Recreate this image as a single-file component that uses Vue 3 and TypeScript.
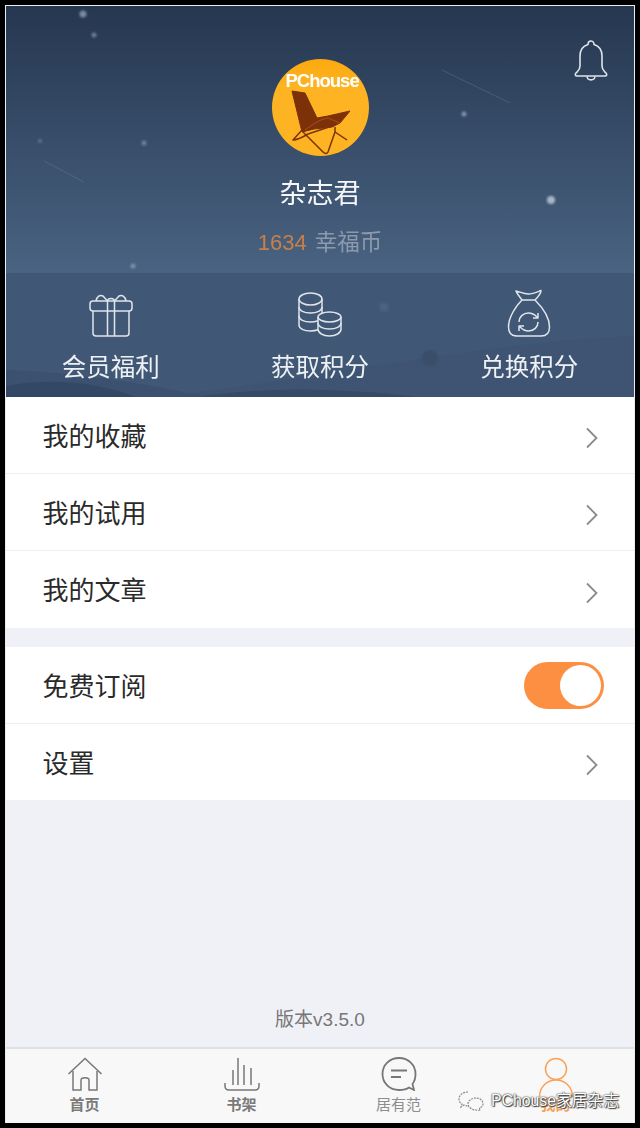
<template>
  <div class="frame">
    <div class="screen">
      <header class="hero">
        <!-- 背景星星和山丘 -->
        <svg class="sky" viewBox="0 0 628 391" width="628" height="391">
          <g class="stars" fill="#b4c0ce">
            <circle cx="77" cy="8" r="3.500" opacity=".6" />
            <circle cx="88" cy="29" r="2.500" opacity=".5" />
            <circle cx="34" cy="135" r="2" opacity=".35" />
            <circle cx="138" cy="137" r="2.500" opacity=".45" />
            <circle cx="458" cy="108" r="2.500" opacity=".6" />
            <circle cx="545" cy="194" r="4" opacity=".9" />
            <circle cx="127" cy="260" r="2.500" opacity=".5" />
            <circle cx="378" cy="301" r="4.500" opacity=".4" />
          </g>
          <g stroke="#8fa0b5" stroke-width="1" opacity=".25">
            <line x1="436" y1="64" x2="504" y2="97" />
            <line x1="38" y1="155" x2="78" y2="176" />
          </g>
          <rect x="0" y="267" width="628" height="124" fill="#3d5371" opacity=".72" />
          <path d="M150 391 C250 380 330 365 420 352 C500 340 570 332 628 330 V391Z" fill="#3e5472" />
          <path d="M0 364 C60 366 130 375 200 391 H0Z" fill="#3c516f" />
          <path d="M0 380 C40 372 90 375 130 391 H0Z" fill="#334864" />
          <path d="M190 391 C260 380 340 382 410 391Z" fill="#364b68" />
          <circle class="tree" cx="424" cy="352" r="8" fill="#3a4e69" />
        </svg>

        <button class="bell" aria-label="通知">
          <svg viewBox="0 0 36 42" width="36" height="42" fill="none" stroke="#dfe4ea" stroke-width="1.600" stroke-linejoin="round">
            <path d="M18 2 C15.500 2 15 4.500 15 5.500 C10 7 7 11 7 17 V27 C7 31 5 32 3 34 C1.500 35.500 2.500 37 4 37 H32 C33.500 37 34.500 35.500 33 34 C31 32 29 31 29 27 V17 C29 11 26 7 21 5.500 C21 4.500 20.500 2 18 2Z" />
            <path d="M14 37.500 C14.500 42 21.500 42 22 37.500" />
          </svg>
        </button>

        <div class="profile">
          <div class="avatar">
            <span class="avatar-brand">PChouse</span>
            <svg class="chair" viewBox="0 0 97 97" width="97" height="97">
              <path d="M20 32 L33 34 L45 59 L56 57 L78 52 L68 64 L60 68 L42 70 L30 73Z" fill="#7c3109" stroke="#7c3109" stroke-width="1" stroke-linejoin="round" />
              <g fill="none" stroke="#7c3109" stroke-width="1.500" stroke-linejoin="round">
                <path d="M30 71 L21 81 C26 81 31 78 36 75 L63 66" />
                <path d="M31 73 L51 93 C53 95 55 95 56 93 L63 73 V68" />
                <path d="M63 73 L75 81" />
              </g>
              <path d="M33 71 C40 66 48 60 56 59 L68 64" fill="none" stroke="#b5561a" stroke-width=".8" />
            </svg>
          </div>
          <div class="nickname">杂志君</div>
          <div class="coins"><span class="coin-num">1634</span> <span class="coin-unit">幸福币</span></div>
        </div>

        <nav class="actions">
          <div class="action">
            <div class="action-icon">
              <svg viewBox="0 0 44 43" width="44" height="43" fill="none" stroke="#dfe5ea" stroke-width="1.500" stroke-linejoin="round">
                <rect x="1" y="7" width="42" height="10" rx="3" />
                <path d="M4 17 V39 a3 3 0 0 0 3 3 H37 a3 3 0 0 0 3 -3 V17" />
                <path d="M18.500 7 V42 M25.500 7 V42" />
                <path d="M7 7 C8 2 11 .800 14 2 L18.500 7" />
                <path d="M37 7 C36 2 33 .800 30 2 L25.500 7" />
                <path d="M18.500 7 C19 3.500 25 3.500 25.500 7" />
              </svg>
            </div>
            <span>会员福利</span>
          </div>
          <div class="action">
            <div class="action-icon">
              <svg viewBox="0 0 44 45" width="44" height="45" fill="none" stroke="#dfe5ea" stroke-width="1.500">
                <ellipse cx="12.500" cy="7" rx="11.500" ry="6" />
                <path d="M1 7 V33 c0 3.500 5 6 11.500 6 c2.500 0 5 -.300 7.500 -1.200" />
                <path d="M24 7 V21" />
                <path d="M1 15 c0 3.500 5 6 11.500 6 s11.500 -2.500 11.500 -6" />
                <path d="M1 24 c0 3.500 5 6 11.500 6 c3 0 5 -.400 7.500 -1.200" />
                <ellipse cx="31.500" cy="25" rx="11.500" ry="5" />
                <path d="M20 25 V37 c0 4 5 7 11.500 7 s11.500 -3 11.500 -7 V25" />
                <path d="M20 31 c0 3.500 5 6 11.500 6 s11.500 -2.500 11.500 -6" />
              </svg>
            </div>
            <span>获取积分</span>
          </div>
          <div class="action">
            <div class="action-icon">
              <svg viewBox="0 0 44 48" width="44" height="48" fill="none" stroke="#dfe5ea" stroke-width="1.500" stroke-linejoin="round">
                <path d="M9 2 C13 3 17 5 21.500 5 C26 5 30 3 34 1.500 C34 5 31 8 28 11 H15 C13 8 10 5 9 2Z" />
                <path d="M15 11 C9 17 1.500 28 1.500 38 C1.500 44 5 47 10 47 H34 C39 47 42.500 44 42.500 38 C42.500 28 34 17 28 11" />
                <path d="M12 33 C12 28 16 24 21.500 24 C25 24 28 26 30 28 M31 24 V29 H26" />
                <path d="M31 33 C31 38 27 42 21.500 42 C18 42 15 40 13 38 M12 42 V37 H17" />
              </svg>
            </div>
            <span>兑换积分</span>
          </div>
        </nav>
      </header>

      <ul class="group">
        <li v-for="item in topMenu" :key="item" class="row">
          <span>{{ item }}</span>
          <svg class="chevron" viewBox="0 0 14 22" width="14" height="22" fill="none" stroke="#8b8b8b" stroke-width="1.800">
            <path d="M2 1.500 L11.500 11 L2 20.500" />
          </svg>
        </li>
      </ul>

      <ul class="group second">
        <li class="row">
          <span>免费订阅</span>
          <div class="switch"><div class="knob"></div></div>
        </li>
        <li class="row">
          <span>设置</span>
          <svg class="chevron" viewBox="0 0 14 22" width="14" height="22" fill="none" stroke="#8b8b8b" stroke-width="1.800">
            <path d="M2 1.500 L11.500 11 L2 20.500" />
          </svg>
        </li>
      </ul>

      <div class="version">版本v3.5.0</div>

      <footer class="tabbar">
        <div class="tab">
          <svg viewBox="0 0 36 34" width="36" height="34" fill="none" stroke="#777" stroke-width="1.500">
            <path d="M1.500 17 L18 1.500 L34.500 17" />
            <path d="M6 14 V33 H14 V23 C14 20 22 20 22 23 V33 H30 V14" />
          </svg>
          <span class="bold">首页</span>
        </div>
        <div class="tab">
          <svg viewBox="0 0 36 34" width="36" height="34" fill="none" stroke="#777" stroke-width="1.500">
            <path d="M1 26 V29 C1 32 2 33 5 33 H31 C34 33 35 32 35 29 V26" />
            <path d="M9 13 V28 M14 1 V28 M20 8 V28 M27 11 V28" />
          </svg>
          <span class="bold">书架</span>
        </div>
        <div class="tab">
          <svg viewBox="0 0 36 34" width="36" height="34" fill="none" stroke="#777" stroke-width="1.800">
            <path d="M18 1 C8.500 1 1.500 8 1.500 17 C1.500 26 8.500 33 18 33 C22 33 26 32 28 30.500 L33 33 L31.500 27 C33.500 24.500 34.500 21 34.500 17 C34.500 8 27.500 1 18 1Z" />
            <path d="M10 13.500 H26 M10 20 H20" />
          </svg>
          <span>居有范</span>
        </div>
        <div class="tab active">
          <svg class="person" viewBox="0 0 36 40" width="36" height="40" fill="none" stroke="#f9a25a" stroke-width="1.500">
            <circle cx="18" cy="11" r="10.500" />
            <path d="M1.500 39 C1.500 29 9 22 18 22 C27 22 34.500 29 34.500 39" />
          </svg>
          <span class="bold">我的</span>
        </div>

        <!-- 公众号水印 -->
        <div class="watermark">
          <svg viewBox="0 0 26 20" width="26" height="20" fill="none" stroke="#8a8a8a" stroke-width="1.200" stroke-dasharray="2 1">
            <path d="M10 1 C5 1 1 4 1 8 C1 10 2 12 4 13 L3 16 L6 14 C8 15 9 15 10 15" />
            <path d="M18 7 C14 7 10 9.500 10 13 C10 16 14 19 18 19 L22 20 L21.500 17 C23.500 16 25 15 25 13 C25 9.500 22 7 18 7Z" />
          </svg>
          <span>PChouse家居杂志</span>
        </div>
      </footer>
    </div>
  </div>
</template>

<script setup lang="ts">
  const topMenu: string[] = ['我的收藏', '我的试用', '我的文章']
</script>

<style>
  html,
  body {
    margin: 0;
    background: #000;
  }
</style>

<style scoped>
  .frame {
    width: 640px;
    height: 1128px;
    box-sizing: border-box;
    padding: 5px;
    background: #000;
    font-family: "Liberation Sans", "Noto Sans CJK SC", sans-serif;
  }

  .screen {
    position: relative;
    width: 630px;
    height: 1118px;
    box-sizing: border-box;
    border: 1px solid #e9ecf0;
    border-bottom: none;
    background: #f0f1f6;
    display: flex;
    flex-direction: column;
  }

  /* 顶部个人信息 */
  .hero {
    position: relative;
    height: 391px;
    flex-shrink: 0;
    overflow: hidden;
    background: linear-gradient(180deg, #263750 0%, #4a6483 70%);
    display: flex;
    flex-direction: column;
  }

  .sky {
    position: absolute;
    left: 0;
    top: 0;
  }

  .stars,
  .tree {
    filter: blur(1px);
  }

  .bell {
    position: absolute;
    top: 33px;
    right: 25px;
    padding: 0;
    border: none;
    background: none;
    line-height: 0;
  }

  .profile {
    position: relative;
    height: 267px;
    box-sizing: border-box;
    padding-top: 53px;
    display: flex;
    flex-direction: column;
    align-items: center;
  }

  .avatar {
    position: relative;
    width: 97px;
    height: 97px;
    border-radius: 50%;
    background: linear-gradient(180deg, #fba90e 0%, #feb322 28%);
    overflow: hidden;
  }

  .avatar-brand {
    position: absolute;
    left: 14px;
    top: 11px;
    color: #fff;
    font-size: 18.500px;
    font-weight: 700;
    letter-spacing: -1px;
    line-height: 22px;
    z-index: 1;
  }

  .chair {
    position: absolute;
    left: 0;
    top: 0;
  }

  .nickname {
    margin-top: 20px;
    color: #f4f6f8;
    font-size: 27px;
    line-height: 36px;
  }

  .coins {
    margin-top: 17px;
    color: #8b9aac;
    font-size: 22px;
    line-height: 28px;
  }

  .coin-num {
    color: #c97f4a;
  }

  .coin-unit {
    margin-left: 2px;
    font-size: 22.500px;
  }

  .actions {
    position: relative;
    height: 124px;
    display: grid;
    grid-template-columns: repeat(3, 1fr);
  }

  .action {
    display: flex;
    flex-direction: column;
    align-items: center;
    padding-top: 16px;
    color: #eef1f4;
    font-size: 24.500px;
  }

  .action-icon {
    height: 48px;
    display: flex;
    align-items: flex-end;
  }

  .action span {
    margin-top: 14px;
    line-height: 34px;
  }

  /* 菜单 */
  .group {
    margin: 0;
    padding: 0;
    list-style: none;
    background: #fff;
  }

  .group.second {
    margin-top: 19px;
  }

  .row {
    height: 77px;
    box-sizing: border-box;
    padding: 0 33px 0 36.500px;
    display: flex;
    align-items: center;
    justify-content: space-between;
    border-bottom: 1px solid #eeeef0;
    color: #2a2a2a;
    font-size: 26px;
  }

  .row > span {
    margin-bottom: 2px;
  }

  .row:last-child {
    border-bottom: none;
  }

  .second .row:last-child {
    height: 76px;
  }

  .chevron {
    margin-top: 6px;
    margin-right: 2px;
  }

  .switch {
    width: 80px;
    height: 47px;
    margin-right: -3px;
    box-sizing: border-box;
    padding: 3px;
    border-radius: 24px;
    background: #fd8f42;
    display: flex;
    justify-content: flex-end;
  }

  .knob {
    width: 41px;
    height: 41px;
    border-radius: 50%;
    background: #fff;
  }

  .version {
    margin-top: auto;
    padding-bottom: 16px;
    text-align: center;
    color: #777;
    font-size: 19px;
    line-height: 22px;
  }

  /* 底部标签栏 */
  .tabbar {
    position: relative;
    height: 76px;
    flex-shrink: 0;
    box-sizing: border-box;
    border-top: 2px solid #dfe0e4;
    background: #f8f8f8;
    display: grid;
    grid-template-columns: repeat(4, 1fr);
    padding: 8px 0 0;
  }

  .tab {
    display: flex;
    flex-direction: column;
    align-items: center;
    color: #8d8d8d;
    font-size: 15px;
    line-height: 16px;
  }

  .tab svg {
    height: 34px;
    margin-bottom: 6px;
  }

  .tab svg.person {
    height: 42px;
    margin-bottom: -2px;
  }

  .tab .bold {
    font-weight: 700;
    color: #7a7a7a;
  }

  .tab.active .bold {
    color: #f9a25a;
  }

  .watermark {
    position: absolute;
    left: 452px;
    top: 42px;
    display: flex;
    align-items: center;
    gap: 7px;
    color: #fff;
    font-size: 15.800px;
    line-height: 20px;
    text-shadow: 0 0 1px #333, 0 0 2px #333, 1px 1px 1px #444;
  }
</style>
